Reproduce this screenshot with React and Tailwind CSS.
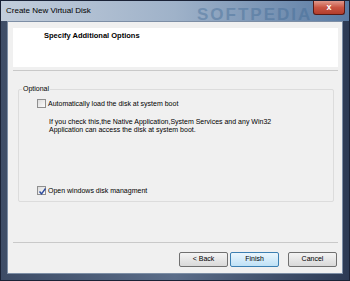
import React from 'react';

const font = { fontFamily: '"Liberation Sans", Arial, sans-serif' };

function CheckBox({ checked }) {
  return (
    <span className="relative inline-flex h-[9px] w-[9px] shrink-0 items-center justify-center border border-[#8f8f8f] bg-gradient-to-br from-[#dcdcdc] to-[#fbfbfb]">
      {checked && (
        <svg viewBox="0 0 9 9" className="absolute left-0 top-0 h-[9px] w-[9px]">
          <path d="M1.5 4.5 L3.5 6.8 L7.5 1.5" fill="none" stroke="#2c4a9e" strokeWidth="1.4" />
        </svg>
      )}
    </span>
  );
}

function Button({ children, primary }) {
  return (
    <div
      className={
        'flex h-[15px] w-[49px] items-center justify-center rounded-[2px] border text-[7px] text-black ' +
        (primary
          ? 'border-[#3c7fb1] bg-gradient-to-b from-[#eaf6fd] to-[#bfe1f6]'
          : 'border-[#707070] bg-gradient-to-b from-[#f4f4f4] to-[#d9d9d9]')
      }
    >
      {children}
    </div>
  );
}

export default function App() {
  return (
    <div className="h-[281px] w-[350px] overflow-hidden" style={font}>
      <div className="flex h-full w-full flex-col border border-[#1a2236] bg-gradient-to-r from-[#3d4c66] via-[#5b6d89] to-[#2d3b55]">
        {/* Title bar */}
        <div className="relative flex h-[20px] shrink-0 items-center bg-gradient-to-r from-[#c2cddb] via-[#9fb2c9] to-[#5a7ba3] pl-[5px]">
          <span className="text-[8px] text-black">Create New Virtual Disk</span>
          <span className="absolute left-[196px] top-[1px] text-[17px] font-bold tracking-[2px] text-[#3d6894] opacity-40">
            SOFTPEDIA
          </span>
          <div className="absolute right-[4px] top-0 flex h-[14px] w-[32px] items-center justify-center rounded-b-[3px] border border-t-0 border-[#5a1a14] bg-gradient-to-b from-[#e0998c] via-[#c95442] to-[#b23d2c]">
            <span className="text-[9px] font-bold leading-none text-white">x</span>
          </div>
        </div>

        {/* Client area */}
        <div className="mx-[6px] mb-[6px] flex flex-1 flex-col border border-[#7d8ea5] bg-[#f0f0f0] pl-[5px] pr-[4px]">
          <div className="mt-[6px] h-[39px] bg-white pl-[31px] pt-[3px]">
            <div className="text-[7.5px] font-bold leading-[10px] text-black">Specify Additional Options</div>
          </div>
          <div className="mt-[3px] h-px bg-[#c9c9c9]" />

          {/* Group box */}
          <div className="relative ml-[5px] mr-[4px] mt-[18px] h-[113px] rounded-[2px] border border-[#dcdcdc]">
            <span className="absolute left-[3px] top-[-6px] bg-[#f0f0f0] px-[1px] text-[7px] leading-[10px] text-black">
              Optional
            </span>
            <div className="ml-[18px] mt-[9px] flex items-center gap-[2px]">
              <CheckBox />
              <span className="text-[7px] leading-[9px] text-black">Automatically load the disk at system boot</span>
            </div>
            <div className="ml-[30px] mt-[10px] text-[7px] leading-[8px] text-black">
              <div>If you check this,the Native Application,System Services and any Win32</div>
              <div>Application can access the disk at system boot.</div>
            </div>
            <div className="ml-[18px] mt-[52px] flex items-center gap-[2px]">
              <CheckBox checked />
              <span className="text-[7px] leading-[9px] text-black">Open windows disk managment</span>
            </div>
          </div>

          <div className="mt-[40px] h-px bg-[#c9c9c9]" />

          <div className="mt-[9px] flex items-center justify-end pr-[1px]">
            <Button>&lt; Back</Button>
            <div className="ml-[2px]">
              <Button primary>Finish</Button>
            </div>
            <div className="ml-[9px]">
              <Button>Cancel</Button>
            </div>
          </div>
        </div>
      </div>
    </div>
  );
}
